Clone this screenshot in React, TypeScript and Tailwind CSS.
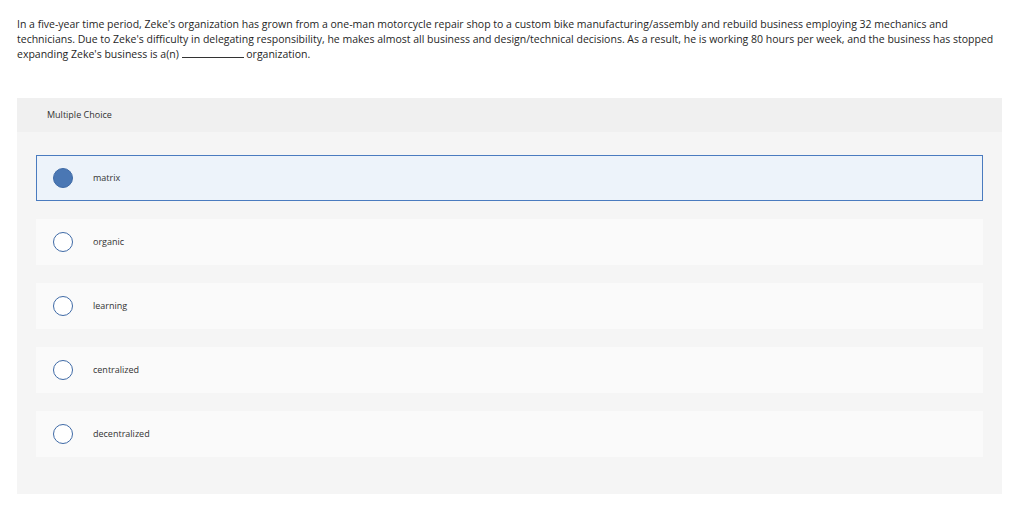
import React from 'react'

const options = ['matrix', 'organic', 'learning', 'centralized', 'decentralized']

export default function App() {
  const selected = 0

  return (
    <div className="w-[1024px] h-[506px] bg-white text-[#222] font-['Open_Sans',sans-serif]">
      <p className="pl-[17px] pt-[17px] text-[10.5px] leading-[15px] text-[#1f1f1f] whitespace-nowrap">
        In a five-year time period, Zeke's organization has grown from a one-man motorcycle repair shop to a custom bike manufacturing/assembly and rebuild business employing 32 mechanics and
        <br />
        technicians. Due to Zeke's difficulty in delegating responsibility, he makes almost all business and design/technical decisions. As a result, he is working 80 hours per week, and the business has stopped
        <br />
        expanding Zeke's business is a(n) <span className="inline-block w-[62px] h-[9px] border-b border-[#333] align-baseline"></span> organization.
      </p>

      <div className="mx-[17px] mt-[36px] w-[985px] bg-[#f5f5f5] pb-[37px]">
        <div className="h-[34px] bg-[#f0f0f0] pl-[30px] flex items-center text-[9px] text-[#333]">
          Multiple Choice
        </div>
        <div className="flex flex-col gap-[18px] px-[19px] pt-[23px]">
          {options.map((opt, i) => {
            const on = i === selected
            return (
              <div
                key={opt}
                className={
                  on
                    ? 'h-[46px] w-[947px] flex items-center bg-[#edf3fa] border border-[#4a7bbf]'
                    : 'h-[46px] w-[947px] flex items-center bg-[#fafafa] border border-transparent'
                }
              >
                <span
                  className={
                    on
                      ? 'ml-[16px] w-[20px] h-[20px] rounded-full bg-[#4a77b4] border border-[#3f6aa6]'
                      : 'ml-[16px] w-[20px] h-[20px] rounded-full bg-white border border-[#3f6aa6]'
                  }
                />
                <span className="ml-[20px] text-[9px] text-[#333]">{opt}</span>
              </div>
            )
          })}
        </div>
      </div>
    </div>
  )
}
